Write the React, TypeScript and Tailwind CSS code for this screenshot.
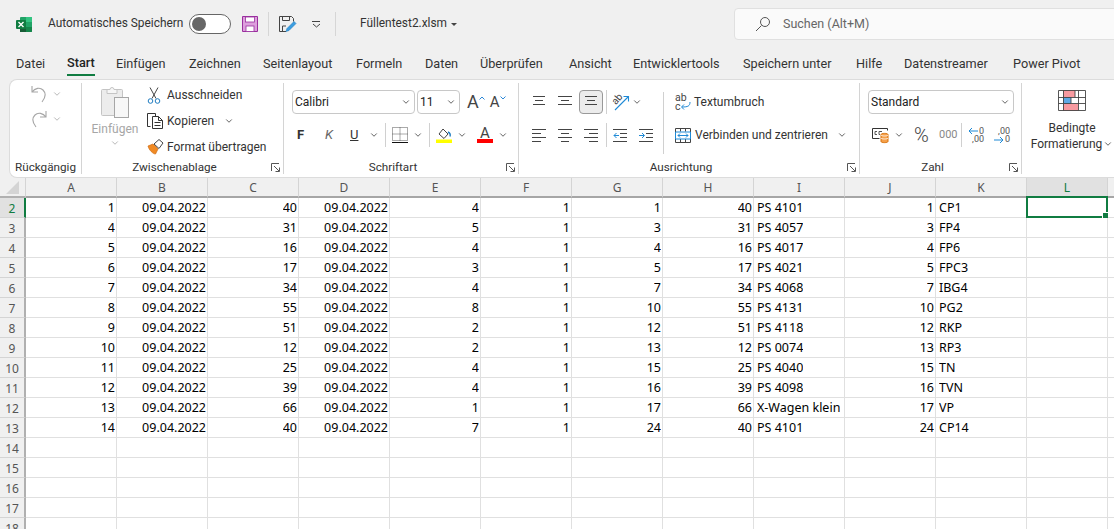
import { ChevronDown } from "lucide-react";

const cols = ["A", "B", "C", "D", "E", "F", "G", "H", "I", "J", "K", "L", ""];

const tabs = [
  { label: "Datei", w: "w-[51px]" },
  { label: "Start", w: "w-[49px]", active: true },
  { label: "Einfügen", w: "w-[73px]" },
  { label: "Zeichnen", w: "w-[74px]" },
  { label: "Seitenlayout", w: "w-[93px]" },
  { label: "Formeln", w: "w-[69px]" },
  { label: "Daten", w: "w-[55px]" },
  { label: "Überprüfen", w: "w-[89px]" },
  { label: "Ansicht", w: "w-[64px]" },
  { label: "Entwicklertools", w: "w-[110px]" },
  { label: "Speichern unter", w: "w-[113px]" },
  { label: "Hilfe", w: "w-[48px]" },
  { label: "Datenstreamer", w: "w-[109px]" },
  { label: "Power Pivot", w: "w-[90px]" },
];

const data: (string | number)[][] = [
  [1, "09.04.2022", 40, "09.04.2022", 4, 1, 1, 40, "PS 4101", 1, "CP1"],
  [4, "09.04.2022", 31, "09.04.2022", 5, 1, 3, 31, "PS 4057", 3, "FP4"],
  [5, "09.04.2022", 16, "09.04.2022", 4, 1, 4, 16, "PS 4017", 4, "FP6"],
  [6, "09.04.2022", 17, "09.04.2022", 3, 1, 5, 17, "PS 4021", 5, "FPC3"],
  [7, "09.04.2022", 34, "09.04.2022", 4, 1, 7, 34, "PS 4068", 7, "IBG4"],
  [8, "09.04.2022", 55, "09.04.2022", 8, 1, 10, 55, "PS 4131", 10, "PG2"],
  [9, "09.04.2022", 51, "09.04.2022", 2, 1, 12, 51, "PS 4118", 12, "RKP"],
  [10, "09.04.2022", 12, "09.04.2022", 2, 1, 13, 12, "PS 0074", 13, "RP3"],
  [11, "09.04.2022", 25, "09.04.2022", 4, 1, 15, 25, "PS 4040", 15, "TN"],
  [12, "09.04.2022", 39, "09.04.2022", 4, 1, 16, 39, "PS 4098", 16, "TVN"],
  [13, "09.04.2022", 66, "09.04.2022", 1, 1, 17, 66, "X-Wagen klein", 17, "VP"],
  [14, "09.04.2022", 40, "09.04.2022", 7, 1, 24, 40, "PS 4101", 24, "CP14"],
];

const leftCols = [8, 10];

function Chev({ className = "" }: { className?: string }) {
  return <ChevronDown size={10} strokeWidth={2} className={`shrink-0 text-[#444] ${className}`} />;
}

function Launcher() {
  return (
    <svg width="9" height="9" viewBox="0 0 9 9" fill="none" stroke="#555" className="shrink-0">
      <path d="M.5 8V.5H8M3 3l5 5M8.500 4.500v4h-4" />
    </svg>
  );
}

function ExcelLogo() {
  return (
    <svg width="17" height="17" viewBox="0 0 17 17">
      <rect x="4" y="1" width="12" height="15" rx="1" fill="#21a366" />
      <rect x="10" y="1" width="6" height="5" fill="#33c481" />
      <rect x="4" y="6" width="6" height="5" fill="#107c41" />
      <rect x="10" y="11" width="6" height="5" fill="#107c41" opacity=".75" />
      <rect x="4" y="11" width="6" height="5" fill="#185c37" />
      <rect x="0" y="4" width="10" height="9" rx="1" fill="#107c41" />
      <path d="M2.500 6l5 5M7.500 6l-5 5" stroke="#fff" strokeWidth="1.400" />
    </svg>
  );
}

function SavePurple() {
  return (
    <svg width="16" height="16" viewBox="0 0 16 16">
      <path d="M.5.5h15v15H.5z" fill="#dd9fdd" stroke="#9a2f9e" />
      <rect x="3.500" y="1" width="9" height="5" fill="#fff" stroke="#9a2f9e" strokeWidth=".8" />
      <rect x="4" y="10" width="8" height="5.500" fill="#fff" stroke="#9a2f9e" strokeWidth=".8" />
    </svg>
  );
}

function SaveAs() {
  return (
    <svg width="18" height="17" viewBox="0 0 18 17" fill="none">
      <path d="M7 15.500H.5V.5h12l2 2v3" stroke="#444" />
      <path d="M3.500.5v4h7v-4M3.500 15v-5H7" stroke="#444" />
      <path d="M7 15.500l1-3 7-7 2 2-7 7z" fill="#3b9de0" stroke="#1f7cc0" strokeWidth=".6" />
    </svg>
  );
}

function LinesIcon({ rows, color = "#444" }: { rows: [number, number][]; color?: string }) {
  return (
    <svg width="14" height="14" viewBox="0 0 14 14" stroke={color} className="shrink-0">
      {rows.map(([a, b], i) => (
        <path key={i} d={`M${a} ${1.5 + i * 4}H${b}`} />
      ))}
    </svg>
  );
}

function PasteIcon() {
  return (
    <svg width="28" height="35" viewBox="0 0 28 35" fill="none">
      <rect x=".5" y="4.500" width="21" height="26" rx="1" fill="#ececec" stroke="#c4c4c4" />
      <path d="M6 4.500h3a2 2 0 0 1 4 0h3v4H6z" fill="#f6f6f6" stroke="#c4c4c4" />
      <rect x="13.500" y="12.500" width="14" height="20" fill="#f7f7f7" stroke="#a6a6a6" />
    </svg>
  );
}

function ScissorsIcon() {
  return (
    <svg width="14" height="17" viewBox="0 0 14 17" fill="none">
      <path d="M3 .5l6 11M11 .5l-6 11" stroke="#444" />
      <circle cx="3.500" cy="14" r="2.300" stroke="#1f7cc0" />
      <circle cx="10.500" cy="14" r="2.300" stroke="#1f7cc0" />
    </svg>
  );
}

function CopyIcon() {
  return (
    <svg width="16" height="16" viewBox="0 0 16 16" fill="none" stroke="#333">
      <path d="M3.500 13.500h-3V.5h8v3" />
      <path d="M5.500 3.500h6l4 4v8h-10z" fill="#fff" />
      <path d="M11.500 3.500v4h4M7.500 9.500h6M7.500 12.500h6" />
    </svg>
  );
}

function BrushIcon() {
  return (
    <svg width="17" height="16" viewBox="0 0 17 16" fill="none">
      <path d="M1 7l5-2 5 5-2.500 5C6 15 2 11 1 7z" fill="#f08a24" stroke="#d06a10" strokeWidth=".7" />
      <path d="M7 5l5-4.500 4 3.500-4 5.500z" fill="#fff" stroke="#444" />
    </svg>
  );
}

function UndoIcon({ flip = false }: { flip?: boolean }) {
  return (
    <svg width="16" height="18" viewBox="0 0 16 18" fill="none" stroke="#a6a6a6" strokeWidth="1.100" className={flip ? "-scale-x-100" : ""}>
      <path d="M1 1v6h6M1 7c3-4 8-5 11-2s3 7-1 12" />
    </svg>
  );
}

function GrowFont({ up }: { up: boolean }) {
  return (
    <div className="relative flex items-center text-[#444] leading-none">
      <span className={up ? "text-[18px]" : "text-[15px]"}>A</span>
      <svg width="6" height="4" viewBox="0 0 6 4" fill="none" stroke="#2b88d8" className="mb-[9px]">
        <path d={up ? "M.5 3.500L3 1l2.500 2.500" : "M.5.5L3 3 5.500.5"} />
      </svg>
    </div>
  );
}

function BorderIcon() {
  return (
    <svg width="16" height="16" viewBox="0 0 16 16" fill="none">
      <path d="M.5.5h15v13H.5zM8 .5v13M.5 7h15" stroke="#555" strokeDasharray="1 1" />
      <path d="M0 15.500h16" stroke="#111" />
    </svg>
  );
}

function FillIcon() {
  return (
    <svg width="16" height="16" viewBox="0 0 16 16" fill="none">
      <path d="M3 7l4-5 5 5-4 4.500z" fill="#fff" stroke="#444" />
      <path d="M12 5c2 1 2.500 3 2 4.500" stroke="#1f7cc0" strokeWidth="1.400" />
      <rect x="0" y="12.500" width="16" height="3.500" fill="#ffff00" />
    </svg>
  );
}

function FontColorIcon() {
  return (
    <div className="flex flex-col items-center w-[16px] leading-none">
      <span className="text-[15px] text-[#444] h-[12px] leading-[12px]">A</span>
      <span className="w-[16px] h-[4px] bg-[#ff0000]" />
    </div>
  );
}

function OrientIcon() {
  return (
    <svg width="17" height="17" viewBox="0 0 17 17" fill="none" className="overflow-visible">
      <path d="M2 16L15 3M10.500 2.500H15.500V7.500" stroke="#1f8ad6" strokeWidth="1.100" />
      <text x="0" y="9" fontSize="10" fill="#444" transform="rotate(-50 4 7)">ab</text>
    </svg>
  );
}

function IndentIcon({ right = false }: { right?: boolean }) {
  return (
    <svg width="14" height="14" viewBox="0 0 14 14" fill="none" className="shrink-0">
      <path d="M0 1.500h14M7 5.500h7M7 9.500h7M0 13.500h14" stroke="#444" />
      <path d={right ? "M0 7.500h5M3 5l2.500 2.500L3 10" : "M6 7.500H1M3.500 5L1 7.500 3.500 10"} stroke="#1f8ad6" />
    </svg>
  );
}

function WrapIcon() {
  return (
    <svg width="16" height="17" viewBox="0 0 16 17" fill="none" className="overflow-visible">
      <text x="0" y="7" fontSize="10.500" fill="#444">ab</text>
      <text x="0" y="16" fontSize="10.500" fill="#444">c</text>
      <path d="M15 8c0 4-2 5-8 5M9 10.500L6.500 13 9 15.500" stroke="#1f8ad6" />
    </svg>
  );
}

function MergeIcon() {
  return (
    <svg width="16" height="15" viewBox="0 0 16 15" fill="none">
      <path d="M.5.5h15v14H.5zM5.500.5v3M10.500.5v3M5.500 11v3.500M10.500 11v3.500" stroke="#444" />
      <path d="M.5 4h15v7H.5z" stroke="#1f8ad6" />
      <path d="M3 7.500h10M5 5.500l-2 2 2 2M11 5.500l2 2-2 2" stroke="#1f8ad6" />
    </svg>
  );
}

function CurrencyIcon() {
  return (
    <svg width="17" height="17" viewBox="0 0 17 17" fill="none">
      <path d="M.5 1.500h15v2M.5 1.500v10h7" stroke="#333" />
      <path d="M3 4.500h2M3 7.500h2M3 4.500v3M7 4.500h3M7 7.500h1M7 4.500v3" stroke="#555" />
      <path d="M9 7.500c0-1.500 7-1.500 7 0v7c0 1.500-7 1.500-7 0z" fill="#f5a04a" stroke="#d9730d" />
      <path d="M9 8c0 1.300 7 1.300 7 0M9 11c0 1.300 7 1.300 7 0" stroke="#fff" strokeWidth=".8" />
    </svg>
  );
}

function DecimalIcon({ more }: { more: boolean }) {
  return (
    <div className="relative w-[16px] h-[17px] text-[9px] leading-[8px] text-[#555] text-right">
      <div>{more ? ",00" : "0"}</div>
      <div>{more ? "0" : ",00"}</div>
      <svg width="10" height="8" viewBox="0 0 10 8" fill="none" stroke="#1f8ad6" className={`absolute left-0 ${more ? "bottom-0" : "top-0"}`}>
        <path d={more ? "M0 4h9M6 1l3 3-3 3" : "M10 4H1M4 1L1 4l3 3"} />
      </svg>
    </div>
  );
}

function CondFormatIcon() {
  return (
    <svg width="28" height="21" viewBox="0 0 28 21" fill="none">
      <rect x="5" y="0" width="12" height="7" fill="#f79aa0" />
      <rect x="5" y="7" width="8" height="7" fill="#5ea9e6" />
      <rect x="5" y="14" width="15" height="7" fill="#f79aa0" />
      <path d="M.5.5h27v20H.5zM.5 7.500h27M.5 13.500h27M5.500.5v20M17 .5v7M20.500.5v20M13 7.500v6" stroke="#444" strokeWidth=".9" />
    </svg>
  );
}

function Sep({ className = "" }: { className?: string }) {
  return <div className={`w-px h-[24px] bg-[#d0d0d0] shrink-0 ${className}`} />;
}

function Select({ label, w }: { label: string; w: string }) {
  return (
    <div className={`${w} h-[24px] border border-[#c8c8c8] rounded-[4px] bg-white flex items-center justify-between pl-[2px] pr-[3px] shrink-0`}>
      <span className="text-[12px] text-[#222]">{label}</span>
      <Chev />
    </div>
  );
}

function GroupLabel({ label, launcher = true }: { label: string; launcher?: boolean }) {
  return (
    <div className={`absolute -bottom-[2px] left-0 right-0 h-[16px] flex items-center justify-center text-[11.700px] text-[#333] ${launcher ? "pr-[16px]" : ""}`}>
      {label}
      {launcher && (
        <span className="absolute right-[3px] top-[3px]">
          <Launcher />
        </span>
      )}
    </div>
  );
}

export default function App() {
  return (
    <div className="w-[1114px] h-[529px] overflow-hidden bg-[#f0f0f0] font-['Roboto',sans-serif] text-[12.700px] text-[#333]">
      {/* title bar */}
      <div className="h-[48px] flex items-center text-[11.900px]">
        <div className="ml-[16px] shrink-0">
          <ExcelLogo />
        </div>
        <span className="ml-[15px] w-[134px] shrink-0 whitespace-nowrap">Automatisches Speichern</span>
        <div className="ml-[7px] w-[42px] h-[20px] shrink-0 rounded-full border border-[#666] bg-white flex items-center pl-[2px]">
          <span className="w-[14px] h-[14px] rounded-full bg-[#666]" />
        </div>
        <div className="ml-[11px] shrink-0">
          <SavePurple />
        </div>
        <div className="ml-[10px] w-px h-[24px] bg-[#d6d6d6] shrink-0" />
        <div className="ml-[10px] shrink-0">
          <SaveAs />
        </div>
        <svg width="9" height="7" viewBox="0 0 9 7" fill="none" stroke="#444" className="ml-[15px] shrink-0">
          <path d="M0 .5h8M1 3l3.500 3L8 3" />
        </svg>
        <div className="ml-[14px] w-px h-[24px] bg-[#d6d6d6] shrink-0" />
        <span className="ml-[24px] w-[85px] shrink-0 whitespace-nowrap">Füllentest2.xlsm</span>
        <svg width="6" height="3" viewBox="0 0 6 3" className="ml-[6px] shrink-0">
          <path d="M0 0h6L3 3z" fill="#444" />
        </svg>
        <div className="ml-[277px] w-[400px] shrink-0 h-[32px] rounded-[4px] border border-[#e0e0e0] bg-[#fafafa] flex items-center pl-[20px] text-[12.500px] text-[#666]">
          <svg width="16" height="16" viewBox="0 0 16 16" fill="none" stroke="#555">
            <circle cx="10" cy="6" r="4.500" />
            <path d="M6.500 9.500L1 15" />
          </svg>
          <span className="ml-[12px]">Suchen (Alt+M)</span>
        </div>
      </div>

      {/* tabs */}
      <div className="h-[30px] pl-[16px] flex items-center">
        {tabs.map((t) => (
          <div key={t.label} className={`${t.w} shrink-0 whitespace-nowrap`}>
            <span className={t.active ? "inline-block pt-[3px] pb-[1px] border-b-2 border-[#107c41] font-medium text-[#222]" : "inline-block pt-[2px]"}>{t.label}</span>
          </div>
        ))}
      </div>

      {/* ribbon */}
      <div className="ml-[9px] mt-[1px] h-[99px] bg-white rounded-l-[8px] border border-r-0 border-[#dcdcdc] flex text-[12px]">
        {/* Rückgängig */}
        <div className="relative w-[72px] shrink-0 my-[3px] border-r border-[#d4d4d4] pl-[21px]">
          <div className="flex items-center h-[25px] gap-[5px] -mt-[2px]">
            <UndoIcon />
            <Chev className="text-[#aaa]" />
          </div>
          <div className="flex items-center h-[25px] gap-[5px]">
            <UndoIcon flip />
            <Chev className="text-[#aaa]" />
          </div>
          <GroupLabel label="Rückgängig" launcher={false} />
        </div>

        {/* Zwischenablage */}
        <div className="relative w-[202px] shrink-0 my-[3px] border-r border-[#d4d4d4] flex">
          <div className="w-[57px] pl-[9px] flex flex-col items-center pt-[2px] text-[#a6a6a6]">
            <PasteIcon />
            <span className="leading-[18px]">Einfügen</span>
            <Chev className="text-[#aaa]" />
          </div>
          <div className="pl-[8px] flex flex-col -mt-[1px]">
            <div className="h-[26px] flex items-center">
              <span className="w-[20px]">
                <ScissorsIcon />
              </span>
              Ausschneiden
            </div>
            <div className="h-[26px] flex items-center">
              <span className="w-[20px]">
                <CopyIcon />
              </span>
              Kopieren
              <Chev className="ml-[10px]" />
            </div>
            <div className="h-[26px] flex items-center whitespace-nowrap">
              <span className="w-[20px]">
                <BrushIcon />
              </span>
              Format übertragen
            </div>
          </div>
          <GroupLabel label="Zwischenablage" />
        </div>

        {/* Schriftart */}
        <div className="relative w-[235px] shrink-0 my-[3px] border-r border-[#d4d4d4] pl-[8px] pt-[7px]">
          <div className="flex items-center">
            <Select label="Calibri" w="w-[123px]" />
            <Select label="11" w="w-[43px] ml-[2px]" />
            <div className="ml-[7px]">
              <GrowFont up />
            </div>
            <div className="ml-[5px]">
              <GrowFont up={false} />
            </div>
          </div>
          <div className="flex items-center h-[24px] mt-[9px]">
            <span className="w-[29px] pl-[5px] font-bold text-[13px] text-[#333]">F</span>
            <span className="w-[24px] italic text-[13px] text-[#666] pl-[4px]">K</span>
            <span className="w-[24px] underline text-[13px] pl-[5px]">U</span>
            <Chev />
            <Sep className="ml-[6px]" />
            <span className="ml-[6px]">
              <BorderIcon />
            </span>
            <Chev className="ml-[5px]" />
            <Sep className="ml-[6px]" />
            <span className="ml-[6px]">
              <FillIcon />
            </span>
            <Chev className="ml-[5px]" />
            <span className="ml-[10px]">
              <FontColorIcon />
            </span>
            <Chev className="ml-[5px]" />
          </div>
          <GroupLabel label="Schriftart" />
        </div>

        {/* Ausrichtung */}
        <div className="relative w-[341px] shrink-0 my-[3px] border-r border-[#d4d4d4] flex pl-[13px] pt-[7px]">
          <div>
            <div className="flex items-center h-[24px]">
              <LinesIcon rows={[[1, 13], [3, 11], [1, 13]]} />
              <span className="ml-[12px]">
                <LinesIcon rows={[[0, 14], [3, 11], [0, 14]]} />
              </span>
              <div className="ml-[7px] w-[24px] h-[24px] rounded-[4px] border border-[#999] bg-[#ececec] flex items-center justify-center">
                <LinesIcon rows={[[1, 13], [3, 11], [1, 13]]} />
              </div>
              <Sep className="ml-[3px]" />
              <span className="ml-[6px]">
                <OrientIcon />
              </span>
              <Chev className="ml-[2px]" />
            </div>
            <div className="flex items-center h-[24px] mt-[9px]">
              <LinesIcon rows={[[0, 14], [0, 9], [0, 14], [0, 9]]} />
              <span className="ml-[12px]">
                <LinesIcon rows={[[0, 14], [3, 11], [0, 14], [3, 11]]} />
              </span>
              <span className="ml-[12px]">
                <LinesIcon rows={[[0, 14], [5, 14], [0, 14], [5, 14]]} />
              </span>
              <Sep className="ml-[8px]" />
              <span className="ml-[6px]">
                <IndentIcon />
              </span>
              <span className="ml-[12px]">
                <IndentIcon right />
              </span>
            </div>
          </div>
          <div className="w-px h-[62px] bg-[#d0d0d0] ml-[10px] mt-[2px]" />
          <div className="pl-[11px]">
            <div className="h-[24px] flex items-center">
              <WrapIcon />
              <span className="ml-[3px]">Textumbruch</span>
            </div>
            <div className="h-[24px] mt-[9px] flex items-center whitespace-nowrap">
              <MergeIcon />
              <span className="ml-[4px] w-[132px]">Verbinden und zentrieren</span>
              <Chev className="ml-[10px]" />
            </div>
          </div>
          <GroupLabel label="Ausrichtung" />
        </div>

        {/* Zahl */}
        <div className="relative w-[162px] shrink-0 my-[3px] border-r border-[#d4d4d4] pl-[8px] pt-[7px]">
          <Select label="Standard" w="w-[146px]" />
          <div className="flex items-center h-[24px] mt-[9px] pl-[4px]">
            <CurrencyIcon />
            <Chev className="ml-[5px]" />
            <span className="ml-[10px] w-[17px] text-[20px] font-light leading-none text-[#444]">%</span>
            <span className="ml-[8px] w-[17px] text-[11px] text-[#888]">000</span>
            <Sep className="ml-[5px]" />
            <span className="ml-[6px]">
              <DecimalIcon more={false} />
            </span>
            <span className="ml-[10px]">
              <DecimalIcon more />
            </span>
          </div>
          <GroupLabel label="Zahl" />
        </div>

        {/* Bedingte Formatierung */}
        <div className="flex-1 flex flex-col items-center pt-[10px] pl-[8px]">
          <CondFormatIcon />
          <span className="mt-[9px] leading-[16px]">Bedingte</span>
          <span className="flex items-center leading-[16px] whitespace-nowrap">
            Formatierung
            <Chev className="ml-[1px]" />
          </span>
        </div>
      </div>

      {/* sheet */}
      <div className="grid grid-cols-[26px_repeat(11,91px)_81px_200px] auto-rows-[20px] bg-white font-['Noto_Sans',sans-serif]">
        <div className="bg-[#f0f0f0] border-r border-b-2 border-[#b0b0b0] border-r-[#d4d4d4] flex items-center justify-center">
          <svg width="13" height="13" viewBox="0 0 13 13">
            <path d="M13 0v13H0z" fill="#d4d4d4" />
          </svg>
        </div>
        {cols.map((c, i) => (
          <div
            key={i}
            className={`flex items-center justify-center pt-[1px] text-[12px] border-b-2 border-r border-b-[#a6a6a6] border-r-[#d4d4d4] ${c === "L" ? "bg-[#e1e1e1] text-[#107c41]" : "bg-[#f0f0f0] text-[#555]"}`}
          >
            {c}
          </div>
        ))}
        {Array.from({ length: 17 }, (_, r) => (
          <div key={r} className="contents">
            <div className={`flex items-center justify-center pt-[2px] text-[12px] border-b border-b-[#d4d4d4] ${r === 0 ? "bg-[#e1e1e1] text-[#107c41] border-r-2 border-r-[#107c41]" : "bg-[#f0f0f0] text-[#555] border-r-2 border-r-[#b0b0b0]"}`}>
              {r + 2}
            </div>
            {cols.map((c, i) => {
              const v = data[r]?.[i];
              const sel = r === 0 && c === "L";
              return (
                <div
                  key={i}
                  className={`relative border-b border-r border-[#e0e0e0] flex items-center pt-[2px] text-[12.500px] text-black overflow-visible ${leftCols.includes(i) ? "pl-[3px]" : "justify-end pr-[1px]"}`}
                >
                  <span className="block max-w-[88px] overflow-hidden whitespace-nowrap">{v}</span>
                  {sel && (
                    <div className="absolute -left-px -top-[2px] -right-px -bottom-px border-2 border-[#107c41]">
                      <span className="absolute -right-[3px] -bottom-[3px] w-[5px] h-[5px] bg-[#107c41] border border-white box-content" />
                    </div>
                  )}
                </div>
              );
            })}
          </div>
        ))}
      </div>
    </div>
  );
}
